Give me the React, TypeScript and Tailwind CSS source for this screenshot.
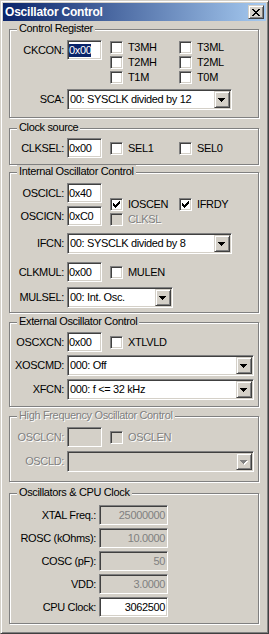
import React from "react";

const sunken =
  "border border-t-[#808080] border-l-[#808080] border-b-white border-r-white shadow-[inset_1px_1px_0_#404040,inset_-1px_-1px_0_#d4d0c8]";
const raised =
  "border border-t-[#d4d0c8] border-l-[#d4d0c8] border-b-[#404040] border-r-[#404040] shadow-[inset_1px_1px_0_#fff,inset_-1px_-1px_0_#808080]";
const dis = "text-[#808080] [text-shadow:1px_1px_0_#fff]";

function Lbl({ children, w = "w-[54px]", disabled }: { children: React.ReactNode; w?: string; disabled?: boolean }) {
  return <div className={`${w} shrink-0 text-right whitespace-nowrap ${disabled ? dis : ""}`}>{children}</div>;
}

function Edit({
  value,
  w = "w-[35px]",
  disabled,
  selected,
  right,
  gray,
}: {
  value?: string;
  w?: string;
  disabled?: boolean;
  selected?: boolean;
  right?: boolean;
  gray?: boolean;
}) {
  return (
    <div
      className={`${sunken} ${w} h-[20px] ml-[3px] shrink-0 flex items-center ${right ? "justify-end pr-[2px]" : "pl-[1px]"} ${
        disabled || gray ? "bg-[#d4d0c8]" : "bg-white"
      } ${gray ? "text-[#808080]" : ""} whitespace-nowrap`}
    >
      {selected ? <span className="bg-[#0a246a] text-white leading-[13px]">{value}</span> : value}
    </div>
  );
}

function Tri({ disabled }: { disabled?: boolean }) {
  const d = "M0 0h7v1h-7z M1 1h5v1h-5z M2 2h3v1h-3z M3 3h1v1h-1z";
  return (
    <svg width="8" height="5" viewBox="0 0 8 5" shapeRendering="crispEdges" className="mt-[1px]">
      {disabled && <path d={d} fill="#fff" transform="translate(1,1)" />}
      <path d={d} fill={disabled ? "#808080" : "#000"} />
    </svg>
  );
}

function Combo({ value, w, disabled }: { value?: string; w: string; disabled?: boolean }) {
  return (
    <div className={`${sunken} ${w} h-[21px] ml-[3px] shrink-0 flex items-center p-[1px] ${disabled ? "bg-[#d4d0c8]" : "bg-white"}`}>
      <span className="flex-1 pl-[1px] whitespace-nowrap overflow-hidden">{value}</span>
      <div className={`${raised} w-[16px] h-[17px] bg-[#d4d0c8] flex items-center justify-center`}>
        <Tri disabled={disabled} />
      </div>
    </div>
  );
}

function Check({ label, checked, disabled }: { label?: string; checked?: boolean; disabled?: boolean }) {
  if (!label) return <div />;
  return (
    <div className="flex items-center h-[13px]">
      <div className={`${sunken} w-[13px] h-[13px] shrink-0 flex items-center justify-center ${disabled ? "bg-[#d4d0c8]" : "bg-white"}`}>
        {checked && (
          <svg width="7" height="7" viewBox="0 0 7 7" shapeRendering="crispEdges">
            <path
              d="M0 2h1v3h-1z M1 3h1v3h-1z M2 4h1v3h-1z M3 3h1v3h-1z M4 2h1v3h-1z M5 1h1v3h-1z M6 0h1v3h-1z"
              fill="#000"
            />
          </svg>
        )}
      </div>
      <span className={`ml-[5px] whitespace-nowrap ${disabled ? dis : ""}`}>{label}</span>
    </div>
  );
}

function Group({
  title,
  disabled,
  className,
  children,
}: {
  title: string;
  disabled?: boolean;
  className: string;
  children: React.ReactNode;
}) {
  return (
    <div
      className={`relative w-[250px] shrink-0 border border-[#808080] shadow-[inset_1px_1px_0_#fff,1px_1px_0_#fff] ${className}`}
    >
      <span className={`absolute left-[7px] top-[-8px] bg-[#d4d0c8] px-[2px] whitespace-nowrap ${disabled ? dis : ""}`}>
        {title}
      </span>
      {children}
    </div>
  );
}

function Row({ children, className = "" }: { children: React.ReactNode; className?: string }) {
  return <div className={`flex items-center ${className}`}>{children}</div>;
}

export default function App() {
  return (
    <div
      className={`w-[269px] h-[634px] bg-[#d4d0c8] ${raised} p-[2px] flex flex-col text-[11px] leading-[13px] text-black tracking-[-0.35px] font-['Liberation_Sans',Arial,sans-serif] overflow-hidden`}
    >
      {/* Title bar */}
      <div className="h-[18px] shrink-0 bg-[linear-gradient(to_right,#0a246a,#a6caf0)] flex items-center pl-[2px] pr-[2px]">
        <span className="text-white font-bold text-[12px] tracking-[-0.2px]">Oscillator Control</span>
        <div className={`${raised} ml-auto w-[16px] h-[14px] bg-[#d4d0c8] flex items-center justify-center`}>
          <svg width="8" height="7" viewBox="0 0 8 7" shapeRendering="crispEdges">
            <path
              d="M0 0h2v1h-2z M6 0h2v1h-2z M1 1h2v1h-2z M5 1h2v1h-2z M2 2h4v1h-4z M3 3h2v1h-2z M2 4h4v1h-4z M1 5h2v1h-2z M5 5h2v1h-2z M0 6h2v1h-2z M6 6h2v1h-2z"
              fill="#000"
            />
          </svg>
        </div>
      </div>

      <div className="flex flex-col pl-[6px]">
        {/* Control Register */}
        <Group title="Control Register" className="mt-[8px] h-[89px] pt-[10px]">
          <div className="flex items-start">
            <Row className="h-[20px]">
              <Lbl>CKCON:</Lbl>
              <Edit value="0x00" selected />
            </Row>
            <div className="ml-[8px] mt-[1px] grid grid-cols-[69px_auto] gap-y-[2px]">
              <Check label="T3MH" />
              <Check label="T3ML" />
              <Check label="T2MH" />
              <Check label="T2ML" />
              <Check label="T1M" />
              <Check label="T0M" />
            </div>
          </div>
          <Row className="mt-[5px]">
            <Lbl>SCA:</Lbl>
            <Combo w="w-[165px]" value="00: SYSCLK divided by 12" />
          </Row>
        </Group>

        {/* Clock source */}
        <Group title="Clock source" className="mt-[10px] h-[37px] pt-[9px]">
          <Row>
            <Lbl>CLKSEL:</Lbl>
            <Edit value="0x00" />
            <div className="ml-[8px] grid grid-cols-[69px_auto]">
              <Check label="SEL1" />
              <Check label="SEL0" />
            </div>
          </Row>
        </Group>

        {/* Internal Oscillator Control */}
        <Group title="Internal Oscillator Control" className="mt-[7px] h-[141px] pt-[10px]">
          <div className="flex items-start">
            <div className="flex flex-col gap-[3px]">
              <Row>
                <Lbl>OSCICL:</Lbl>
                <Edit value="0x40" />
              </Row>
              <Row>
                <Lbl>OSCICN:</Lbl>
                <Edit value="0xC0" />
              </Row>
            </div>
            <div className="ml-[8px] mt-[15px] grid grid-cols-[69px_auto] gap-y-[2px]">
              <Check label="IOSCEN" checked />
              <Check label="IFRDY" checked />
              <Check label="CLKSL" disabled />
              <div />
            </div>
          </div>
          <Row className="mt-[7px]">
            <Lbl>IFCN:</Lbl>
            <Combo w="w-[165px]" value="00: SYSCLK divided by 8" />
          </Row>
          <Row className="mt-[8px]">
            <Lbl>CLKMUL:</Lbl>
            <Edit value="0x00" />
            <div className="ml-[8px]">
              <Check label="MULEN" />
            </div>
          </Row>
          <Row className="mt-[5px]">
            <Lbl>MULSEL:</Lbl>
            <Combo w="w-[106px]" value="00: Int. Osc." />
          </Row>
        </Group>

        {/* External Oscillator Control */}
        <Group title="External Oscillator Control" className="mt-[9px] h-[85px] pt-[9px]">
          <Row>
            <Lbl>OSCXCN:</Lbl>
            <Edit value="0x00" />
            <div className="ml-[8px]">
              <Check label="XTLVLD" />
            </div>
          </Row>
          <Row className="mt-[3px]">
            <Lbl>XOSCMD:</Lbl>
            <Combo w="w-[187px]" value="000: Off" />
          </Row>
          <Row className="mt-[3px]">
            <Lbl>XFCN:</Lbl>
            <Combo w="w-[187px]" value="000: f <= 32 kHz" />
          </Row>
        </Group>

        {/* High Frequency Oscillator Control */}
        <Group title="High Frequency Oscillator Control" disabled className="mt-[9px] h-[66px] pt-[10px]">
          <Row>
            <Lbl disabled>OSCLCN:</Lbl>
            <Edit disabled />
            <div className="ml-[8px]">
              <Check label="OSCLEN" disabled />
            </div>
          </Row>
          <Row className="mt-[4px]">
            <Lbl disabled>OSCLD:</Lbl>
            <Combo w="w-[187px]" disabled />
          </Row>
        </Group>

        {/* Oscillators & CPU Clock */}
        <Group title="Oscillators & CPU Clock" className="mt-[11px] h-[131px] pt-[11px]">
          <div className="flex flex-col gap-[3px]">
            <Row>
              <Lbl w="w-[86px]">XTAL Freq.:</Lbl>
              <Edit w="w-[69px]" value="25000000" right gray />
            </Row>
            <Row>
              <Lbl w="w-[86px]">ROSC (kOhms):</Lbl>
              <Edit w="w-[69px]" value="10.0000" right gray />
            </Row>
            <Row>
              <Lbl w="w-[86px]">COSC (pF):</Lbl>
              <Edit w="w-[69px]" value="50" right gray />
            </Row>
            <Row>
              <Lbl w="w-[86px]">VDD:</Lbl>
              <Edit w="w-[69px]" value="3.0000" right gray />
            </Row>
            <Row>
              <Lbl w="w-[86px]">CPU Clock:</Lbl>
              <Edit w="w-[69px]" value="3062500" right />
            </Row>
          </div>
        </Group>
      </div>
    </div>
  );
}
